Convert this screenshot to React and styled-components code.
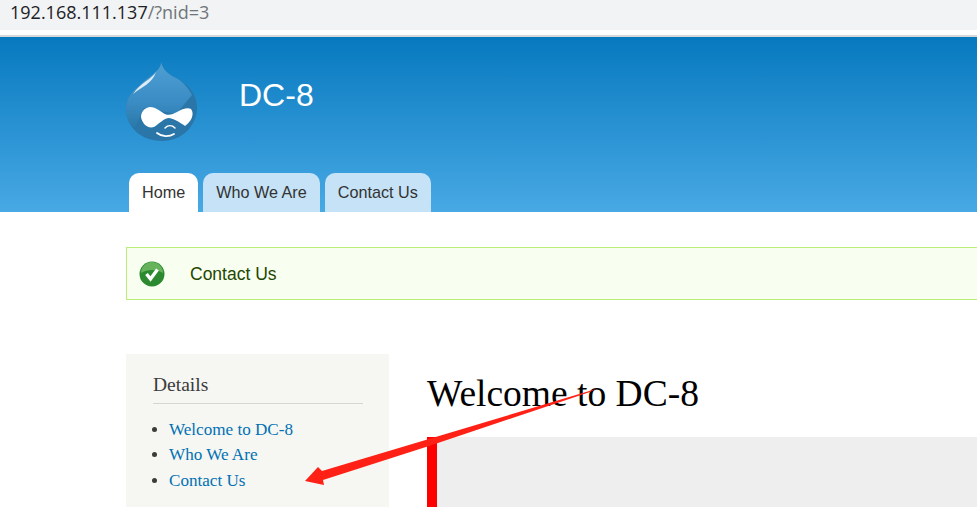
import React from "react";
import styled, { createGlobalStyle } from "styled-components";

const GlobalStyle = createGlobalStyle`
  html, body {
    margin: 0;
    padding: 0;
    height: 507px;
    overflow: hidden;
    background: #fff;
    font-family: "Liberation Sans", Arial, sans-serif;
  }
`;

const Page = styled.div`
  position: relative;
  width: 977px;
  height: 507px;
  overflow: hidden;
`;

const AddressBar = styled.div`
  height: 30px;
  background: #f1f3f4;
  padding-left: 10px;
  font-family: "Open Sans", sans-serif;
  font-size: 18px;
  line-height: 25px;
  color: #202124;
  span {
    color: #70757a;
  }
`;

const BarGap = styled.div`
  height: 5px;
  background: #fff;
  border-bottom: 2px solid #d9d9d9;
`;

const Header = styled.header`
  height: 175px;
  padding-left: 126px;
  box-sizing: border-box;
  display: flex;
  flex-direction: column;
  background: linear-gradient(to bottom, #0779bf, #48a9e4);
`;

const Branding = styled.div`
  height: 136px;
  display: flex;
  align-items: flex-start;
  padding-top: 25px;
  box-sizing: border-box;
`;

const SiteName = styled.div`
  margin: 15px 0 0 41px;
  color: #fff;
  font-size: 32px;
  line-height: 36px;
`;

const Tabs = styled.nav`
  display: flex;
  gap: 5px;
  padding-left: 3px;
`;

const Tab = styled.a`
  height: 39px;
  padding: 0 13px;
  border-radius: 10px 10px 0 0;
  background: ${(p) => (p.$active ? "#fff" : "#c5e2f6")};
  color: #333;
  font-size: 16.2px;
  line-height: 39px;
`;

const Content = styled.div`
  padding: 35px 0 0 126px;
`;

const Status = styled.div`
  height: 53px;
  box-sizing: border-box;
  width: 860px;
  display: flex;
  align-items: center;
  gap: 25px;
  padding: 1px 0 0 12px;
  background: #f8fff0;
  border: 1px solid #bbee77;
  border-right: 0;
  color: #234600;
  font-size: 17.5px;
`;

const Columns = styled.div`
  display: flex;
  margin-top: 54px;
`;

const Sidebar = styled.aside`
  width: 263px;
  height: 153px;
  flex-shrink: 0;
  box-sizing: border-box;
  padding: 20px 26px 0 27px;
  background: #f6f6f2;
  font-family: "Liberation Serif", serif;
`;

const BlockTitle = styled.h2`
  margin: 0;
  padding-bottom: 8px;
  border-bottom: 1px solid #d6d6d1;
  color: #3b3b3b;
  font-size: 19.5px;
  font-weight: 400;
  line-height: 21px;
`;

const Menu = styled.ul`
  margin: 12.7px 0 0;
  padding-left: 16px;
  color: #3b3b3b;
  font-size: 17.1px;
  line-height: 25.5px;
`;

const MenuLink = styled.a`
  color: #0071b3;
`;

const Main = styled.main`
  margin-left: 38px;
  flex: 1;
  font-family: "Liberation Serif", serif;
`;

const Title = styled.h1`
  margin: 19px 0 0;
  color: #000;
  font-size: 37.5px;
  font-weight: 400;
  line-height: 42px;
`;

const Quote = styled.div`
  margin-top: 22px;
  height: 80px;
  border-left: 10px solid #f00;
  background: #eee;
`;

const Annotation = styled.svg`
  position: absolute;
  left: 0;
  top: 0;
  pointer-events: none;
`;

const DrupalLogo = () => (
  <svg width="72" height="80" viewBox="0 0 72 80">
    <defs>
      <linearGradient id="drop" x1="0" y1="0" x2="0" y2="1">
        <stop offset="0" stopColor="#4f9fd4" />
        <stop offset="0.6" stopColor="#3a8cc4" />
        <stop offset="1" stopColor="#2a78a9" />
      </linearGradient>
    </defs>
    <path
      d="M35 0C35 9 23 14 15 22C5 30 0 37 0 46C0 65 15 79 36 79C56 79 71 64 71 45C71 31 60 21 50 16C42 12 37 8 35 0Z"
      fill="#2a76a8"
    />
    <path
      d="M35 0C35 9 23 14 15 22C5 30 0 37 0 46C0 55 3 62 8 67L18 46L50 52L66 33C62 25 56 19 50 16C42 12 37 8 35 0Z"
      fill="url(#drop)"
    />
    <path d="M30 10C26 17 14 21 7 32C14 26 27 21 30 10Z" fill="#dcedf8" />
    <path
      d="M24 45C30 45 35 50 39 52C43 54 47 52 51 50C56 47 62 45 65 47C69 52 65 60 59 64C55 61 49 57 43 56C38 56 33 62 28 65C21 67 16 61 15 55C15 50 18 46 24 45Z"
      fill="#fff"
    />
    <path
      d="M39 66C42 63 46 63 49 66"
      fill="none"
      stroke="#fff"
      strokeWidth="1.5"
      strokeLinecap="round"
    />
    <path
      d="M31 71C36 75 43 75 48 72"
      fill="none"
      stroke="#fff"
      strokeWidth="1.8"
      strokeLinecap="round"
    />
  </svg>
);

const CheckIcon = () => (
  <svg width="26" height="26" viewBox="0 0 26 26">
    <circle cx="13" cy="13" r="12.5" fill="#2b8a2f" />
    <path d="M2 12A11 11 0 0 1 24 12C18 8 8 8 2 12Z" fill="#66b35c" />
    <path
      d="M7.5 13L11.5 18L18.5 8.5"
      fill="none"
      stroke="#fff"
      strokeWidth="3.4"
    />
  </svg>
);

const App = () => {
  return (
    <Page>
      <GlobalStyle />
      <AddressBar>
        192.168.111.137<span>/?nid=3</span>
      </AddressBar>
      <BarGap />
      <Header>
        <Branding>
          <DrupalLogo />
          <SiteName>DC-8</SiteName>
        </Branding>
        <Tabs>
          <Tab $active>Home</Tab>
          <Tab>Who We Are</Tab>
          <Tab>Contact Us</Tab>
        </Tabs>
      </Header>
      <Content>
        <Status>
          <CheckIcon />
          Contact Us
        </Status>
        <Columns>
          <Sidebar>
            <BlockTitle>Details</BlockTitle>
            <Menu>
              <li>
                <MenuLink>Welcome to DC-8</MenuLink>
              </li>
              <li>
                <MenuLink>Who We Are</MenuLink>
              </li>
              <li>
                <MenuLink>Contact Us</MenuLink>
              </li>
            </Menu>
          </Sidebar>
          <Main>
            <Title>Welcome to DC-8</Title>
            <Quote />
          </Main>
        </Columns>
      </Content>
      <Annotation width="977" height="507" viewBox="0 0 977 507">
        <path
          d="M596 389L322 471L318 467L305 481L324 485L323 480L429 446L590 392Z"
          fill="#ff2116"
        />
      </Annotation>
    </Page>
  );
};

export default App;
